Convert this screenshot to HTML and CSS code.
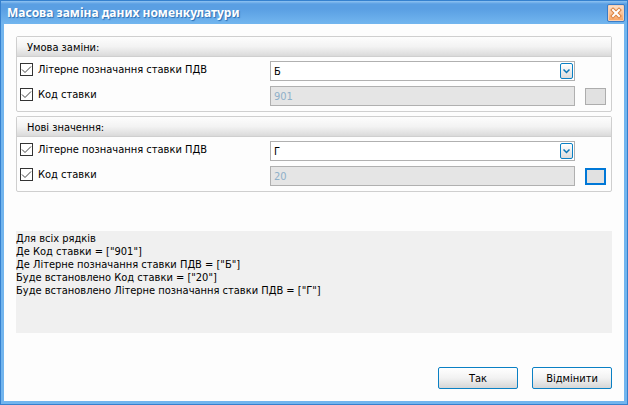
FILE: index.html
```html
<!DOCTYPE html>
<html lang="uk">
<head>
    <meta charset="UTF-8">
    <meta name="viewport" content="width=device-width, initial-scale=1.0">
    <title>Масова заміна даних номенкулатури</title>
    <link rel="stylesheet" href="styles.css">
</head>
<body>
    <div class="window">
        <header class="titlebar">
            <h1 class="title">Масова заміна даних номенкулатури</h1>
            <button type="button" class="close" aria-label="Закрити">
                <svg width="12" height="12" viewBox="0 0 12 12" fill="none">
                    <path d="M3 3l6 6M9 3l-6 6" stroke="#d9813f" stroke-width="4" stroke-linecap="square"/>
                    <path d="M3 3l6 6M9 3l-6 6" stroke="#ffffff" stroke-width="2" stroke-linecap="square"/>
                </svg>
            </button>
        </header>

        <form class="content">
            <fieldset class="group" aria-labelledby="conditionTitle">
                <h2 class="group-title" id="conditionTitle">Умова заміни:</h2>
                <div class="row">
                    <label class="check">
                        <span class="box">
                            <input type="checkbox" checked>
                            <svg width="13" height="13" viewBox="0 0 13 13" fill="none" stroke="#444444">
                                <path d="M2 6.5l3 3 6-6"/>
                            </svg>
                        </span>
                        Літерне позначання ставки ПДВ
                    </label>
                    <div class="combo">
                        <select aria-label="Літерне позначання ставки ПДВ"><option>Б</option></select>
                        <span class="arrow">
                            <svg width="7" height="5" viewBox="0 0 7 5" fill="none" stroke="#0a76b5" stroke-width="1.5">
                                <path d="M.5 .5l3 3 3-3"/>
                            </svg>
                        </span>
                    </div>
                </div>
                <div class="row">
                    <label class="check">
                        <span class="box">
                            <input type="checkbox" checked>
                            <svg width="13" height="13" viewBox="0 0 13 13" fill="none" stroke="#444444">
                                <path d="M2 6.5l3 3 6-6"/>
                            </svg>
                        </span>
                        Код ставки
                    </label>
                    <input type="text" class="field" value="901" aria-label="Код ставки" disabled>
                    <button type="button" class="pick" aria-label="Вибрати"></button>
                </div>
            </fieldset>

            <fieldset class="group" aria-labelledby="valuesTitle">
                <h2 class="group-title" id="valuesTitle">Нові значення:</h2>
                <div class="row">
                    <label class="check">
                        <span class="box">
                            <input type="checkbox" checked>
                            <svg width="13" height="13" viewBox="0 0 13 13" fill="none" stroke="#444444">
                                <path d="M2 6.5l3 3 6-6"/>
                            </svg>
                        </span>
                        Літерне позначання ставки ПДВ
                    </label>
                    <div class="combo">
                        <select aria-label="Нове літерне позначання ставки ПДВ"><option>Г</option></select>
                        <span class="arrow">
                            <svg width="7" height="5" viewBox="0 0 7 5" fill="none" stroke="#0a76b5" stroke-width="1.5">
                                <path d="M.5 .5l3 3 3-3"/>
                            </svg>
                        </span>
                    </div>
                </div>
                <div class="row">
                    <label class="check">
                        <span class="box">
                            <input type="checkbox" checked>
                            <svg width="13" height="13" viewBox="0 0 13 13" fill="none" stroke="#444444">
                                <path d="M2 6.5l3 3 6-6"/>
                            </svg>
                        </span>
                        Код ставки
                    </label>
                    <input type="text" class="field" value="20" aria-label="Новий код ставки" disabled>
                    <button type="button" class="pick pick-active" aria-label="Вибрати"></button>
                </div>
            </fieldset>

            <div class="summary">
                <p>Для всіх рядків</p>
                <p>Де Код ставки = ["901"]</p>
                <p>Де Літерне позначання ставки ПДВ = ["Б"]</p>
                <p>Буде встановлено Код ставки = ["20"]</p>
                <p>Буде встановлено Літерне позначання ставки ПДВ = ["Г"]</p>
            </div>

            <div class="actions">
                <button type="button" class="button">Так</button>
                <button type="button" class="button">Відмінити</button>
            </div>
        </form>
    </div>
</body>
</html>
```
FILE: styles.css
```css
:root {
    --frame: #3581cf;
    --frame-light: #72b5ee;
    --accent: #0a80c4;
    --background: #fdfdfd;
    --line: #cfcfcf;
    --field-line: #b0b0b0;
}

* {
    margin: 0;
    padding: 0;
    box-sizing: border-box;
}

body,
button,
input,
select {
    font-family: Tahoma, "DejaVu Sans Condensed", "DejaVu Sans", sans-serif;
    font-size: 11px;
    line-height: 13px;
    color: #000000;
}

/* Window frame */
.window {
    min-height: 100vh;
    display: flex;
    flex-direction: column;
    border: 1px solid var(--frame);
    background: var(--frame-light);
}

.titlebar {
    height: 23px;
    flex: none;
    display: flex;
    align-items: center;
    justify-content: space-between;
    padding: 0 2px 0 6px;
    background: linear-gradient(#8fc3f2 0, #5a9fe3 3px, #5a9fe3 8px, #72b6ef 100%);
}

.title {
    font-family: "Noto Sans", sans-serif;
    font-size: 12px;
    line-height: 16px;
    font-weight: bold;
    color: #ffffff;
    text-shadow: 1px 1px 1px #2a6cb0;
}

.close {
    width: 18px;
    height: 18px;
    display: grid;
    place-items: center;
    border: 1px solid #3a7cc8;
    border-radius: 2px;
    background: linear-gradient(#fde3d0, #f9a35f);
    box-shadow: inset 0 0 0 1px #fbd0b0;
}

.content {
    flex: 1;
    display: flex;
    flex-direction: column;
    margin: 0 3px 3px;
    padding: 12px;
    background: var(--background);
}

/* Groups */
.group {
    border: 1px solid var(--line);
    border-radius: 2px;
    padding-bottom: 5px;
    margin-bottom: 4px;
}

.group-title {
    height: 20px;
    padding: 4px 10px 2px;
    font-size: 11px;
    line-height: 13px;
    font-weight: normal;
    border-bottom: 1px solid var(--line);
    background: linear-gradient(#fdfdfd, #f3f3f3 50%, #dadada);
}

.row {
    display: grid;
    grid-template-columns: 240px 1fr 21px;
    column-gap: 10px;
    align-items: center;
    padding: 0 5px 0 3px;
    margin-top: 4px;
}

.row + .row {
    margin-top: 5px;
}

.check {
    display: flex;
    align-items: center;
    gap: 5px;
    padding-bottom: 4px;
}

/* Checkboxes */
.box {
    display: grid;
}

.box input,
.box svg {
    grid-area: 1 / 1;
}

.box input {
    appearance: none;
    width: 13px;
    height: 13px;
    border: 1px solid #333333;
    background: #ffffff;
}

.box svg {
    visibility: hidden;
    pointer-events: none;
}

.box input:checked + svg {
    visibility: visible;
}

/* Fields */
.combo {
    display: grid;
    align-items: center;
}

.combo > * {
    grid-area: 1 / 1;
}

.combo select,
.field {
    appearance: none;
    width: 100%;
    height: 20px;
    padding: 0 3px;
    border: 1px solid var(--field-line);
    border-radius: 0;
    background: #ffffff;
}

.field:disabled {
    background: #e5e5e5;
    color: #8fb0c9;
}

.arrow {
    justify-self: end;
    display: grid;
    place-items: center;
    width: 13px;
    height: 16px;
    margin-right: 2px;
    border: 1px solid var(--accent);
    border-radius: 2px;
    background: linear-gradient(#ffffff, #dcdcdc);
    pointer-events: none;
}

.pick {
    height: 17px;
    border: 1px solid #adadad;
    background: #e1e1e1;
}

.pick-active {
    border: 2px solid #0078d7;
}

/* Summary */
.summary {
    min-height: 102px;
    margin-top: 35px;
    padding-top: 1px;
    background: #f0f0f0;
}

/* Buttons */
.actions {
    display: flex;
    justify-content: flex-end;
    gap: 14px;
    margin-top: auto;
}

.button {
    width: 80px;
    height: 22px;
    border: 1px solid var(--accent);
    border-radius: 2px;
    background: linear-gradient(#ffffff, #f2f2f2 50%, #d6d6d6);
}
```
